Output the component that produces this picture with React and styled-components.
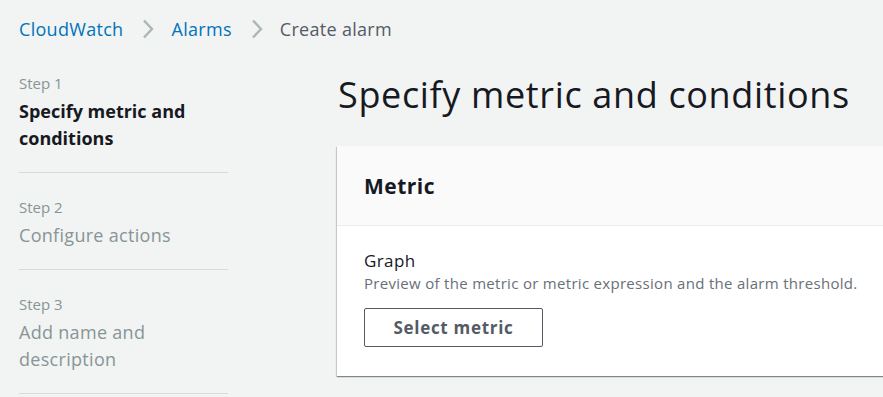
import React from 'react';
import styled, { createGlobalStyle } from 'styled-components';

const GlobalStyle = createGlobalStyle`
  html, body {
    margin: 0;
    padding: 0;
    background: #f2f3f3;
    font-family: "Open Sans", "Noto Sans", Arial, sans-serif;
    color: #16191f;
    overflow: hidden;
  }
`;

const Page = styled.div`
  width: 883px;
  height: 397px;
  padding: 0 0 0 19px;
  box-sizing: border-box;
  overflow: hidden;
`;

const Breadcrumbs = styled.nav`
  display: flex;
  align-items: center;
  height: 58px;
  font-size: 18px;
  letter-spacing: 0.3px;
`;

const Crumb = styled.a`
  color: ${(p) => (p.current ? '#545b64' : '#0073bb')};
  text-decoration: none;
`;

const Chevron = styled.span`
  display: flex;
  align-items: center;
  margin: 0 17px 0 19px;
`;

const Layout = styled.div`
  display: grid;
  grid-template-columns: 209px 1fr;
  column-gap: 109px;
`;

const StepList = styled.ol`
  list-style: none;
  margin: 14px 0 0;
  padding: 0;
`;

const StepItem = styled.li`
  padding: 0 0 20px;
  margin-bottom: 23px;
  border-bottom: 1px solid #d5dbdb;
`;

const StepLabel = styled.div`
  font-size: 15px;
  line-height: 22px;
  margin-bottom: 4px;
  color: #879596;
`;

const StepTitle = styled.div`
  font-size: 18px;
  line-height: 27px;
  font-weight: ${(p) => (p.active ? 700 : 400)};
  letter-spacing: ${(p) => (p.active ? '0' : '0.3px')};
  color: ${(p) => (p.active ? '#16191f' : '#879596')};
`;

const Main = styled.main`
  padding-top: 14px;
  min-width: 0;
`;

const Heading = styled.h1`
  margin: 0 0 28px 1px;
  font-size: 36px;
  font-weight: 400;
  line-height: 46px;
  letter-spacing: 0.65px;
  white-space: nowrap;
  color: #16191f;
`;

const Card = styled.section`
  width: 600px;
  background: #fff;
  box-shadow: 0 1px 1px 0 rgba(0, 28, 36, 0.3), 1px 1px 1px 0 rgba(0, 28, 36, 0.15),
    -1px 1px 1px 0 rgba(0, 28, 36, 0.15);
`;

const CardHeader = styled.header`
  background: #fafafa;
  border-bottom: 1px solid #eaeded;
  padding: 0 27px;
  height: 79px;
  display: flex;
  align-items: center;
`;

const CardTitle = styled.h2`
  margin: 0;
  font-size: 21px;
  font-weight: 700;
  letter-spacing: 0.5px;
  color: #16191f;
`;

const CardBody = styled.div`
  padding: 24px 27px 29px;
`;

const FieldLabel = styled.div`
  font-size: 17px;
  line-height: 22px;
  letter-spacing: 0.4px;
  color: #16191f;
`;

const FieldDescription = styled.div`
  font-size: 15px;
  line-height: 22px;
  letter-spacing: 0.3px;
  white-space: nowrap;
  color: #687078;
  margin-bottom: 14px;
`;

const Button = styled.button`
  width: 179px;
  height: 39px;
  background: #fff;
  border: 1px solid #545b64;
  border-radius: 2px;
  color: #545b64;
  font-family: inherit;
  font-size: 17px;
  font-weight: 700;
  letter-spacing: 0.7px;
  cursor: pointer;
`;

const ChevronIcon = () => (
  <svg width="12" height="20" viewBox="0 0 12 20" fill="none">
    <path d="M2 1.5l8 8.5-8 8.5" stroke="#aab7b8" strokeWidth="2.4" />
  </svg>
);

const steps = [
  { label: 'Step 1', title: 'Specify metric and conditions', active: true },
  { label: 'Step 2', title: 'Configure actions' },
  { label: 'Step 3', title: 'Add name and description' },
];

export default function App() {
  return (
    <>
      <GlobalStyle />
      <Page>
        <Breadcrumbs>
          <Crumb href="#">CloudWatch</Crumb>
          <Chevron><ChevronIcon /></Chevron>
          <Crumb href="#">Alarms</Crumb>
          <Chevron><ChevronIcon /></Chevron>
          <Crumb current>Create alarm</Crumb>
        </Breadcrumbs>
        <Layout>
          <StepList>
            {steps.map((s) => (
              <StepItem key={s.label}>
                <StepLabel>{s.label}</StepLabel>
                <StepTitle active={s.active}>{s.title}</StepTitle>
              </StepItem>
            ))}
          </StepList>
          <Main>
            <Heading>Specify metric and conditions</Heading>
            <Card>
              <CardHeader>
                <CardTitle>Metric</CardTitle>
              </CardHeader>
              <CardBody>
                <FieldLabel>Graph</FieldLabel>
                <FieldDescription>
                  Preview of the metric or metric expression and the alarm threshold.
                </FieldDescription>
                <Button>Select metric</Button>
              </CardBody>
            </Card>
          </Main>
        </Layout>
      </Page>
    </>
  );
}
